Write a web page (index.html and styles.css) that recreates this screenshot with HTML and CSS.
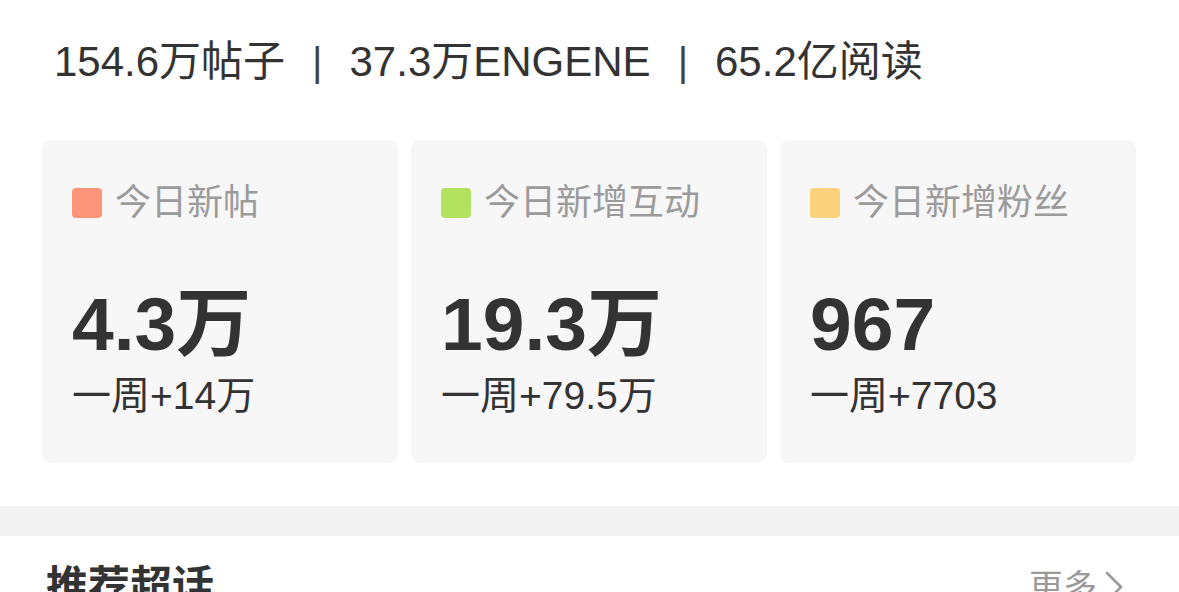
FILE: index.html
```html
<!DOCTYPE html>
<html lang="zh-CN">
<head>
<meta charset="utf-8">
<link rel="stylesheet" href="styles.css">
</head>
<body>
<div class="page">
  <div class="summary">
    <span>154.6万帖子</span>
    <span class="sep">|</span>
    <span>37.3万ENGENE</span>
    <span class="sep">|</span>
    <span>65.2亿阅读</span>
  </div>
  <div class="cards">
    <div class="card">
      <div class="label"><span class="dot dot-orange"></span>今日新帖</div>
      <div class="value">4.3万</div>
      <div class="week">一周+14万</div>
    </div>
    <div class="card">
      <div class="label"><span class="dot dot-green"></span>今日新增互动</div>
      <div class="value">19.3万</div>
      <div class="week">一周+79.5万</div>
    </div>
    <div class="card">
      <div class="label"><span class="dot dot-yellow"></span>今日新增粉丝</div>
      <div class="value">967</div>
      <div class="week">一周+7703</div>
    </div>
  </div>
  <div class="band"></div>
  <div class="section-head">
    <div class="section-title">推荐超话</div>
    <div class="more">更多<svg class="chev" viewBox="0 0 22 36" width="22" height="36"><path d="M4 4 L18 18 L4 32" fill="none" stroke="#9a9a9a" stroke-width="2.6" stroke-linecap="round" stroke-linejoin="round"/></svg></div>
  </div>
</div>
</body>
</html>
```
FILE: styles.css
```css
html, body {
  margin: 0;
  padding: 0;
  background: #ffffff;
}
body {
  font-family: "Liberation Sans", "Noto Sans CJK SC", sans-serif;
  color: #333333;
  width: 1179px;
  height: 592px;
  overflow: hidden;
}
.page {
  display: flex;
  flex-direction: column;
}
.summary {
  display: flex;
  align-items: center;
  gap: 27px;
  padding: 41px 0 0 54px;
  font-size: 42px;
  line-height: 42px;
  height: 42px;
  color: #333333;
}
.summary .sep {
  font-size: 40px;
  color: #444444;
}
.cards {
  display: flex;
  gap: 13px;
  padding: 0 43px 0 42px;
  margin-top: 57px;
}
.card {
  flex: 1;
  background: #f7f7f7;
  border-radius: 9px;
  padding: 45px 30px 0;
  display: flex;
  flex-direction: column;
  height: 323px;
  box-sizing: border-box;
}
.label {
  display: flex;
  align-items: center;
  gap: 13px;
  font-size: 36px;
  line-height: 36px;
  height: 36px;
  color: #9b9b9b;
}
.dot {
  width: 30px;
  height: 30px;
  border-radius: 4px;
  flex: none;
}
.dot-orange { background: #fd957a; }
.dot-green { background: #b3e35e; }
.dot-yellow { background: #fdd27c; }
.value {
  margin-top: 66px;
  font-size: 75px;
  line-height: 74px;
  font-weight: bold;
  color: #333333;
}
.week {
  margin-top: 15px;
  font-size: 39px;
  line-height: 39px;
  color: #333333;
}
.band {
  margin-top: 43px;
  height: 30px;
  background: #f3f3f3;
}
.section-head {
  display: flex;
  justify-content: space-between;
  align-items: center;
  padding: 30px 54px 0 46px;
}
.section-title {
  font-size: 42px;
  line-height: 42px;
  font-weight: bold;
  color: #333333;
}
.more {
  display: flex;
  align-items: center;
  gap: 6px;
  font-size: 34px;
  line-height: 42px;
  color: #9a9a9a;
}
.chev {
  display: block;
}
```
